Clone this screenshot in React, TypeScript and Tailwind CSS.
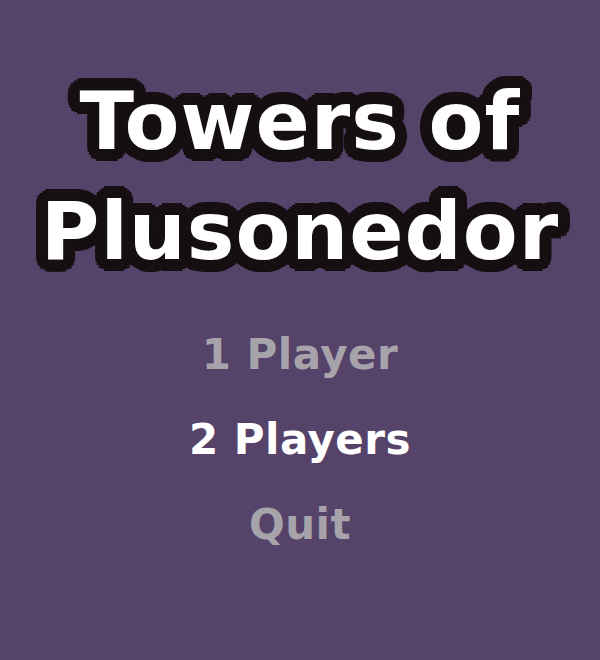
export default function App() {
  return (
    <div className="w-[600px] h-[660px] bg-[#55436a] flex flex-col items-center font-['DejaVu_Sans',sans-serif] overflow-hidden">
      <h1 className="mt-[67px] flex flex-col items-center text-white font-bold text-[80px] leading-[110px] tracking-[1px] [text-shadow:6px_0_0_#160f12,-6px_0_0_#160f12,0_6px_0_#160f12,0_-6px_0_#160f12,4.2px_4.2px_0_#160f12,-4.2px_4.2px_0_#160f12,4.2px_-4.2px_0_#160f12,-4.2px_-4.2px_0_#160f12,12px_0_0_#160f12,11.6px_3.1px_0_#160f12,10.4px_6px_0_#160f12,8.5px_8.5px_0_#160f12,6px_10.4px_0_#160f12,3.1px_11.6px_0_#160f12,0_12px_0_#160f12,-3.1px_11.6px_0_#160f12,-6px_10.4px_0_#160f12,-8.5px_8.5px_0_#160f12,-10.4px_6px_0_#160f12,-11.6px_3.1px_0_#160f12,-12px_0_0_#160f12,-11.6px_-3.1px_0_#160f12,-10.4px_-6px_0_#160f12,-8.5px_-8.5px_0_#160f12,-6px_-10.4px_0_#160f12,-3.1px_-11.6px_0_#160f12,0_-12px_0_#160f12,3.1px_-11.6px_0_#160f12,6px_-10.4px_0_#160f12,8.5px_-8.5px_0_#160f12,10.4px_-6px_0_#160f12,11.6px_-3.1px_0_#160f12]">
        <span>Towers of</span>
        <span>Plusonedor</span>
      </h1>
      <nav className="mt-[44px] flex flex-col items-center gap-[38px] text-[42px] leading-[47px] tracking-[0.5px] font-bold">
        <span className="text-[#a7a3ab]">1 Player</span>
        <span className="text-white">2 Players</span>
        <span className="text-[#a7a3ab]">Quit</span>
      </nav>
    </div>
  );
}
